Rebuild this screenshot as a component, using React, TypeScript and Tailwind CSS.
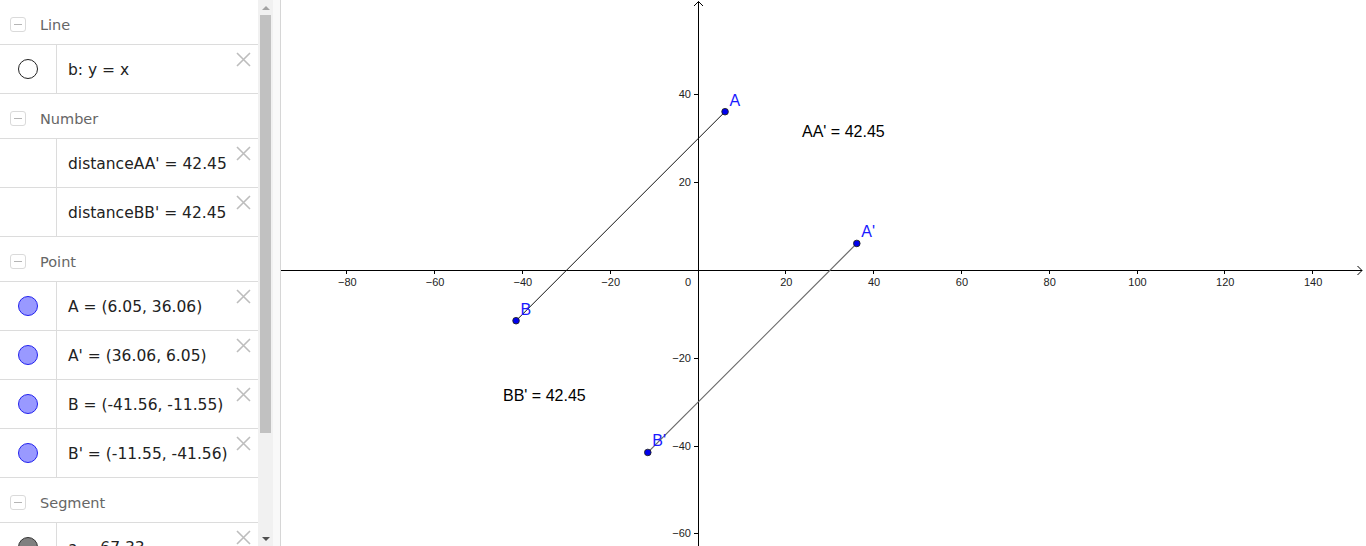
import React from "react";

const ORIGIN_X = 698.5;
const ORIGIN_Y = 270;
const SCALE = 4.39;

const px = (x: number) => ORIGIN_X + x * SCALE;
const py = (y: number) => ORIGIN_Y - y * SCALE;

type Item = { text: string; kind: "line" | "none" | "point" | "segment" };
type Section = { title: string; items: Item[] };

const sections: Section[] = [
  { title: "Line", items: [{ text: "b: y = x", kind: "line" }] },
  {
    title: "Number",
    items: [
      { text: "distanceAA' = 42.45", kind: "none" },
      { text: "distanceBB' = 42.45", kind: "none" },
    ],
  },
  {
    title: "Point",
    items: [
      { text: "A = (6.05, 36.06)", kind: "point" },
      { text: "A' = (36.06, 6.05)", kind: "point" },
      { text: "B = (-41.56, -11.55)", kind: "point" },
      { text: "B' = (-11.55, -41.56)", kind: "point" },
    ],
  },
  { title: "Segment", items: [{ text: "a = 67.33", kind: "segment" }] },
];

const points = [
  { name: "A", x: 6.05, y: 36.06 },
  { name: "A'", x: 36.06, y: 6.05 },
  { name: "B", x: -41.56, y: -11.55 },
  { name: "B'", x: -11.55, y: -41.56 },
];

const Marker = ({ kind }: { kind: Item["kind"] }) => {
  if (kind === "none") return null;
  if (kind === "line")
    return <div className="w-[20px] h-[20px] rounded-full bg-white border-[1.5px] border-[#222]" />;
  if (kind === "point")
    return <div className="w-[20px] h-[20px] rounded-full bg-[#9999ff] border border-[#2222ee]" />;
  return <div className="w-[20px] h-[20px] rounded-full bg-[#808080] border border-[#333]" />;
};

const CloseIcon = () => (
  <svg className="absolute top-[7px] right-[7px]" width="15" height="15" viewBox="0 0 15 15">
    <path d="M1 1 L14 14 M14 1 L1 14" stroke="#bdbdbd" strokeWidth="1.6" fill="none" />
  </svg>
);

const SectionHeader = ({ title }: { title: string }) => (
  <div className="h-[45px] shrink-0 border-b border-[#dcdcdc] pt-[5px] flex items-center">
    <div className="ml-[10px] w-[16px] h-[15px] border border-[#dadada] rounded-[3px] flex items-center justify-center">
      <div className="w-[8px] h-[1px] bg-[#b5b5b5]" />
    </div>
    <span className="ml-[14px] pt-[2px] text-[14.5px] text-[#666]">{title}</span>
  </div>
);

const ItemRow = ({ item }: { item: Item }) => (
  <div className="h-[49px] shrink-0 border-b border-[#dcdcdc] flex">
    <div className="w-[57px] shrink-0 border-r border-[#dcdcdc] flex items-center justify-center">
      <Marker kind={item.kind} />
    </div>
    <div className="relative flex-1 pl-[11px] pt-[4px] flex items-center text-[15.5px] text-[#222] whitespace-nowrap">
      {item.text}
      <CloseIcon />
    </div>
  </div>
);

const Graph = () => {
  const xTicks = [-80, -60, -40, -20, 20, 40, 60, 80, 100, 120, 140];
  const yTicks = [40, 20, -20, -40, -60];
  const fmt = (v: number) => (v < 0 ? "\u2212" + Math.abs(v) : String(v));
  const P = Object.fromEntries(points.map((p) => [p.name, p]));

  return (
    <svg
      className="block"
      width="1085"
      height="546"
      viewBox="281 0 1085 546"
      style={{ fontFamily: '"Liberation Sans", Arial, sans-serif' }}
    >
      {/* axes */}
      <line x1="281" y1="270.5" x2="1362" y2="270.5" stroke="#000" strokeWidth="1" />
      <path d="M1357.5 266 L1362 270.5 L1357.5 275" stroke="#000" fill="none" strokeWidth="1" />
      <line x1="698.5" y1="1.5" x2="698.5" y2="546" stroke="#000" strokeWidth="1" />
      <path d="M694 6 L698.5 1.5 L703 6" stroke="#000" fill="none" strokeWidth="1" />

      {xTicks.map((v) => {
        const x = Math.round(px(v)) - 0.5;
        return (
          <g key={"x" + v}>
            <line x1={x} y1="270" x2={x} y2="274" stroke="#000" />
            <text x={px(v)} y="286" fontSize="11" textAnchor="middle" fill="#222">
              {fmt(v)}
            </text>
          </g>
        );
      })}
      <text x="691" y="286" fontSize="11" textAnchor="end" fill="#222">
        0
      </text>
      {yTicks.map((v) => {
        const y = Math.round(py(v)) + 0.5;
        return (
          <g key={"y" + v}>
            <line x1="694" y1={y} x2="698" y2={y} stroke="#000" />
            <text x="691" y={py(v) + 4} fontSize="11" textAnchor="end" fill="#222">
              {fmt(v)}
            </text>
          </g>
        );
      })}

      {/* segments */}
      <line x1={px(P["A"].x)} y1={py(P["A"].y)} x2={px(P["B"].x)} y2={py(P["B"].y)} stroke="#111" strokeWidth="1" />
      <line x1={px(P["A'"].x)} y1={py(P["A'"].y)} x2={px(P["B'"].x)} y2={py(P["B'"].y)} stroke="#6a6a6a" strokeWidth="1.2" />

      {/* points */}
      {points.map((p) => (
        <g key={p.name}>
          <circle cx={px(p.x)} cy={py(p.y)} r="3.3" fill="#0000ee" stroke="#222" strokeWidth="0.9" />
          <text x={px(p.x) + 4.5} y={py(p.y) - 6} fontSize="16" fill="#1a1aff">
            {p.name}
          </text>
        </g>
      ))}

      <text x="802" y="137" fontSize="16" fill="#000">
        AA' = 42.45
      </text>
      <text x="503" y="401" fontSize="16" fill="#000">
        BB' = 42.45
      </text>
    </svg>
  );
};

export default function App() {
  return (
    <div className="flex w-[1366px] h-[546px] overflow-hidden bg-white">
      {/* Algebra view */}
      <div
        className="w-[258px] shrink-0 h-full overflow-hidden flex flex-col"
        style={{ fontFamily: '"DejaVu Sans", sans-serif' }}
      >
        {sections.map((s) => (
          <React.Fragment key={s.title}>
            <SectionHeader title={s.title} />
            {s.items.map((it) => (
              <ItemRow key={it.text} item={it} />
            ))}
          </React.Fragment>
        ))}
      </div>

      {/* scrollbar */}
      <div className="w-[15px] shrink-0 h-full bg-[#f1f1f1] flex flex-col items-center">
        <div className="h-[15px] flex items-center justify-center">
          <div className="w-0 h-0 border-l-[4px] border-r-[4px] border-b-[4px] border-l-transparent border-r-transparent border-b-[#a3a3a3]" />
        </div>
        <div className="w-[11px] h-[418px] bg-[#c1c1c1]" />
        <div className="flex-1" />
        <div className="h-[15px] flex items-center justify-center">
          <div className="w-0 h-0 border-l-[4px] border-r-[4px] border-t-[4px] border-l-transparent border-r-transparent border-t-[#505050]" />
        </div>
      </div>
      <div className="w-[7px] shrink-0 h-full bg-[#f9f9f9] border-r border-[#d6d6d6] box-content" />

      {/* graphics view */}
      <div className="flex-1 h-full">
        <Graph />
      </div>
    </div>
  );
}
